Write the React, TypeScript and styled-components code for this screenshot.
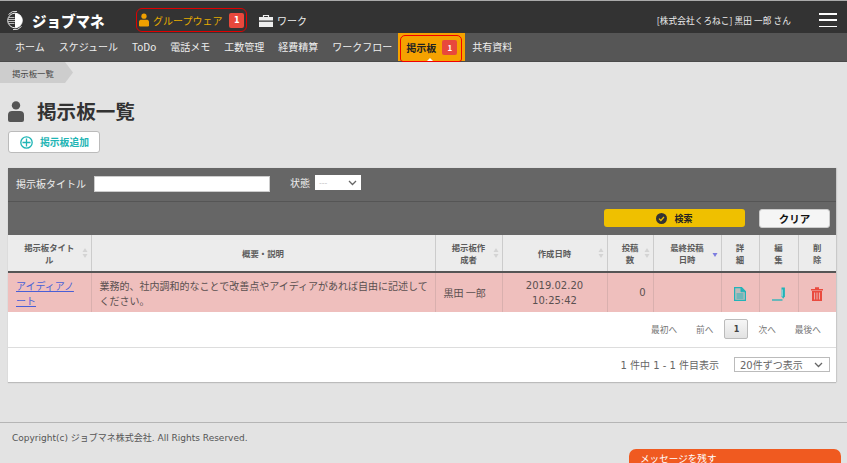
import React from "react";
import styled, { createGlobalStyle } from "styled-components";

const Global = createGlobalStyle`
  html, body { margin: 0; padding: 0; height: 100%; overflow: hidden; background: #e3e3e3; }
  body { font-family: "DejaVu Sans", "Noto Sans CJK JP", sans-serif; font-size: 10px; color: #555; }
  * { box-sizing: border-box; }
`;

const Page = styled.div`
  position: relative;
  width: 847px;
  height: 463px;
  overflow: hidden;
  border-top: 1px solid #aaa;
`;

const Header = styled.header`
  display: flex;
  align-items: center;
  height: 32px;
  background: #333;
  color: #fff;
  padding: 6px 10px 0 5px;
`;
const Logo = styled.div`
  display: flex;
  align-items: center;
  width: 131px;
  gap: 7px;
`;
const LogoText = styled.span`
  font-family: "Noto Sans CJK JP", sans-serif;
  font-size: 14.5px;
  font-weight: 900;
  letter-spacing: 0;
  white-space: nowrap;
`;
const GroupLink = styled.div`
  display: flex;
  align-items: center;
  width: 111px;
  height: 24px;
  border: 1.5px solid #e00000;
  border-radius: 6px;
  padding-left: 2px;
  color: #e5ab00;
`;
const LinkLabel = styled.span`
  font-family: "Noto Sans CJK JP", sans-serif;
  font-size: 10px;
  white-space: nowrap;
  margin-left: 4px;
`;
const Badge = styled.span`
  display: inline-flex;
  align-items: center;
  justify-content: center;
  width: 15px;
  height: 15px;
  background: #e8483c;
  border-radius: 2px;
  color: #fff;
  font-size: 8px;
  font-weight: 700;
`;
const GroupBadge = styled(Badge)`
  margin-left: 7px;
`;
const WorkLink = styled.div`
  display: flex;
  align-items: center;
  margin-left: 12px;
  color: #eee;
`;
const UserName = styled.div`
  margin-left: auto;
  font-size: 8.6px;
  font-family: "Noto Sans CJK JP", sans-serif;
  letter-spacing: 0.12px;
  color: #eee;
  white-space: nowrap;
`;
const Burger = styled.div`
  display: flex;
  flex-direction: column;
  justify-content: space-between;
  width: 18px;
  height: 14px;
  margin-left: 28px;
  span { display: block; height: 1.5px; background: #fff; }
`;

const Nav = styled.nav`
  display: flex;
  align-items: stretch;
  height: 29px;
  background: #565656;
  padding-left: 8px;
  border-bottom: 1px solid #4a4a4a;
`;
const NavItem = styled.div`
  display: flex;
  align-items: center;
  padding: 0 7px 2px;
  font-family: "Noto Sans CJK JP", sans-serif;
  font-size: 10px;
  color: #eee;
  white-space: nowrap;
`;
const ActiveItem = styled.div`
  position: relative;
  display: flex;
  align-items: center;
  width: 67px;
  margin-left: -1px;
  background: #f5a200;
  padding: 2px 3px 0 2px;
`;
const ActiveInner = styled.div`
  position: relative;
  display: flex;
  align-items: center;
  width: 62px;
  height: 27px;
  border: 1.5px solid #f00000;
  border-bottom-width: 1px;
  border-radius: 5px 5px 3px 3px;
  padding: 0 0 2px 5px;
  color: #222;
  font-family: "Noto Sans CJK JP", sans-serif;
  font-weight: 700;
  font-size: 10px;
  &::after {
    content: "";
    position: absolute;
    left: 26px;
    bottom: 0;
    border: 3px solid transparent;
    border-top: 0;
    border-bottom: 3px solid #fff;
  }
`;
const ActiveBadge = styled(Badge)`
  margin-left: 6px;
`;

const Crumb = styled.div`
  display: flex;
  height: 21px;
  width: 73px;
  align-items: center;
  padding-left: 12px;
  background: #cdcdcd;
  clip-path: polygon(0 0, 65px 0, 73px 50%, 65px 100%, 0 100%);
  font-family: "Noto Sans CJK JP", sans-serif;
  font-size: 8.4px;
  color: #444;
  white-space: nowrap;
`;

const TitleRow = styled.div`
  display: flex;
  align-items: center;
  gap: 13px;
  height: 30px;
  margin: 13px 0 0 8px;
`;
const Title = styled.h1`
  margin: 0;
  font-family: "Noto Sans CJK JP", sans-serif;
  font-size: 19.6px;
  font-weight: 700;
  color: #333;
  line-height: 1;
`;

const AddButton = styled.div`
  display: flex;
  align-items: center;
  width: 92px;
  height: 22px;
  margin: 5px 0 0 8px;
  padding-left: 11px;
  gap: 7px;
  background: #fff;
  border: 1px solid #bbb;
  border-radius: 3px;
  color: #1fb5b5;
  font-family: "Noto Sans CJK JP", sans-serif;
  font-weight: 700;
  font-size: 9.8px;
`;

const Panel = styled.section`
  width: 828px;
  height: 214px;
  margin: 15px 0 0 8px;
  background: #fff;
  box-shadow: 0 1px 1px #bbb, 1px 0 1px #ccc;
`;
const SearchRow = styled.div`
  display: flex;
  align-items: center;
  height: 34px;
  padding: 0 0 2px 8px;
  background: #666;
  border-bottom: 1px solid #555;
  color: #eee;
  font-family: "Noto Sans CJK JP", sans-serif;
  font-size: 10px;
`;
const TextInput = styled.div`
  width: 176px;
  height: 16px;
  margin-left: 8px;
  background: #fff;
  border: 1px solid #ccc;
`;
const StatusLabel = styled.span`
  margin: -3px 0 0 20px;
`;
const StatusSelect = styled.div`
  display: flex;
  align-items: center;
  justify-content: space-between;
  width: 46px;
  height: 15px;
  margin: -2px 0 0 5px;
  padding: 0 4px 0 4px;
  background: #fff;
  color: #bbb;
  font-size: 8px;
`;
const ActionRow = styled.div`
  display: flex;
  justify-content: flex-end;
  align-items: flex-start;
  height: 33px;
  padding: 7px 6px 0 0;
  gap: 14px;
  background: #666;
`;
const SearchButton = styled.div`
  display: flex;
  align-items: center;
  justify-content: center;
  gap: 7px;
  width: 141px;
  height: 18px;
  background: #efc000;
  border-radius: 3px;
  color: #222;
  font-family: "Noto Sans CJK JP", sans-serif;
  font-weight: 700;
  font-size: 9px;
`;
const ClearButton = styled.div`
  display: flex;
  align-items: center;
  justify-content: center;
  width: 71px;
  height: 19px;
  background: #f5f5f5;
  border: 1px solid #ccc;
  border-radius: 3px;
  color: #111;
  font-family: "Noto Sans CJK JP", sans-serif;
  font-weight: 700;
  font-size: 10.5px;
`;

const Table = styled.table`
  width: 828px;
  table-layout: fixed;
  border-collapse: collapse;
`;
const Th = styled.th`
  position: relative;
  height: 37px;
  padding: 0;
  background: #ececec;
  border-right: 1px solid #ccc;
  border-bottom: 2px solid #555;
  font-family: "Noto Sans CJK JP", sans-serif;
  font-size: 8.4px;
  line-height: 12px;
  font-weight: 700;
  color: #5c5c5c;
  &:last-child { border-right: 0; }
`;
const Sort = styled.svg`
  position: absolute;
  top: 13px;
  right: 3px;
`;
const Td = styled.td<{ $align?: string }>`
  height: 40px;
  padding: 0 7px 0 8px;
  background: #efbfbd;
  border-right: 1px solid #d9b0ae;
  font-size: 10px;
  line-height: 15px;
  font-family: "Noto Sans CJK JP", sans-serif;
  color: #5a5050;
  text-align: ${(p) => p.$align || "left"};
  &:last-child { border-right: 0; }
`;
const DescCell = styled(Td)`
  padding-right: 4px;
`;
const DateCell = styled(Td)`
  font-family: "DejaVu Sans", sans-serif;
  padding: 0;
`;
const CountCell = styled(Td)`
  font-family: "DejaVu Sans", sans-serif;
`;
const IconCell = styled(Td)`
  padding: 2px 0 0;
  svg { display: block; margin: 0 auto; }
`;
const TitleLink = styled.a`
  color: #4a5fd6;
  text-decoration: underline;
`;

const Pager = styled.div`
  display: flex;
  align-items: center;
  height: 36px;
  padding: 0 0 1px 643px;
  border-bottom: 1px solid #ddd;
  font-family: "Noto Sans CJK JP", sans-serif;
  font-size: 8.7px;
  color: #777;
  white-space: nowrap;
`;
const PagerLink = styled.span<{ $gap: number }>`
  margin-left: ${(p) => p.$gap}px;
`;
const PageCurrent = styled.span`
  display: flex;
  align-items: center;
  justify-content: center;
  width: 24px;
  height: 20px;
  margin: 0 0 0 11px;
  background: linear-gradient(#f6f6f6, #e2e2e2);
  border: 1px solid #bbb;
  border-radius: 2px;
  color: #444;
  font-family: "DejaVu Sans", sans-serif;
  font-weight: 700;
  font-size: 8px;
`;
const PageFoot = styled.div`
  display: flex;
  align-items: center;
  justify-content: flex-end;
  height: 33px;
  padding-right: 6px;
  font-family: "DejaVu Sans", "Noto Sans CJK JP", sans-serif;
  font-size: 10px;
  color: #666;
`;
const PerPage = styled.div`
  display: flex;
  align-items: center;
  justify-content: space-between;
  width: 96px;
  height: 15px;
  margin-left: 15px;
  padding: 0 6px 0 5px;
  border: 1px solid #bbb;
  background: #fff;
  white-space: nowrap;
  font-size: 10px;
`;

const Footer = styled.footer`
  height: 41px;
  margin-top: 40px;
  padding: 9px 0 0 12px;
  border-top: 1px solid #b5b5b5;
  font-size: 9px;
  line-height: 12px;
  color: #555;
  white-space: nowrap;
`;
const ChatTab = styled.div`
  position: absolute;
  left: 629px;
  top: 448px;
  width: 212px;
  height: 24px;
  padding: 2px 0 0 11px;
  background: #f05a20;
  border-radius: 7px 7px 0 0;
  color: #fff;
  font-family: "Noto Sans CJK JP", sans-serif;
  font-size: 9.6px;
  line-height: 14px;
`;

const Person = ({ color, w, h }: { color: string; w: number; h: number }) => (
  <svg width={w} height={h} viewBox="0 0 16 21">
    <circle cx="8" cy="4.4" r="4.2" fill={color} />
    <path d="M0 13.5C0 11 2 10 4 10h8c2 0 4 1 4 3.5V19a2 2 0 0 1-2 2H2a2 2 0 0 1-2-2z" fill={color} />
  </svg>
);

const Chevron = ({ color = "#666" }: { color?: string }) => (
  <svg width="9" height="6" viewBox="0 0 9 6">
    <path d="M1 1l3.5 3.5L8 1" fill="none" stroke={color} strokeWidth="1.3" />
  </svg>
);

const SortIcon = () => (
  <Sort width="6" height="10" viewBox="0 0 6 10">
    <path d="M3 0l2.5 4h-5zM3 10L.5 6h5z" fill="#d4d4d4" />
  </Sort>
);

const columns: [React.ReactNode, number, boolean][] = [
  [<>掲示板タイト<br />ル</>, 83, true],
  ["概要・説明", 344, false],
  [<>掲示板作<br />成者</>, 67, true],
  ["作成日時", 105, true],
  [<>投稿<br />数</>, 46, true],
  [<>最終投稿<br />日時</>, 68, false],
  [<>詳<br />細</>, 38, false],
  [<>編<br />集</>, 39, false],
  [<>削<br />除</>, 38, false],
];

export default function App() {
  return (
    <Page>
      <Global />
      <Header>
        <Logo>
          <svg width="20" height="21" viewBox="0 0 20 21">
            <path d="M3.5 4.5A9 9 0 0 1 12 1.4M16.5 16.5A9 9 0 0 1 8 19.6" fill="none" stroke="#ddd" strokeWidth="1" />
            <circle cx="10" cy="10.5" r="7.3" fill="#333" stroke="#eee" strokeWidth="1" />
            <path d="M10 3.2a7.3 7.3 0 0 1 0 14.6z" fill="#fff" />
            <path d="M3.5 7.5h6M3 9.5h7M3 11.5h7M3.5 13.5h6" stroke="#bbb" strokeWidth="1" />
          </svg>
          <LogoText>ジョブマネ</LogoText>
        </Logo>
        <GroupLink>
          <Person color="#f0a000" w={10} h={14} />
          <LinkLabel>グループウェア</LinkLabel>
          <GroupBadge>1</GroupBadge>
        </GroupLink>
        <WorkLink>
          <svg width="14" height="13" viewBox="0 0 14 13">
            <path d="M4.5 3V1.5h5V3" fill="none" stroke="#eee" strokeWidth="1.2" />
            <path d="M0 3h14v3.6H0zM0 7.8h14V13H0z" fill="#eee" />
          </svg>
          <LinkLabel>ワーク</LinkLabel>
        </WorkLink>
        <UserName>[株式会社くろねこ] 黒田 一郎 さん</UserName>
        <Burger>
          <span />
          <span />
          <span />
        </Burger>
      </Header>
      <Nav>
        {["ホーム", "スケジュール", "ToDo", "電話メモ", "工数管理", "経費精算", "ワークフロー"].map((t) => (
          <NavItem key={t}>{t}</NavItem>
        ))}
        <ActiveItem>
          <ActiveInner>
            掲示板
            <ActiveBadge>1</ActiveBadge>
          </ActiveInner>
        </ActiveItem>
        <NavItem>共有資料</NavItem>
      </Nav>
      <Crumb>掲示板一覧</Crumb>
      <TitleRow>
        <Person color="#555" w={16} h={21} />
        <Title>掲示板一覧</Title>
      </TitleRow>
      <AddButton>
        <svg width="13" height="13" viewBox="0 0 13 13">
          <circle cx="6.5" cy="6.5" r="5.7" fill="none" stroke="#1fb5b5" strokeWidth="1.3" />
          <path d="M6.5 2.5v8M2.5 6.5h8" stroke="#1fb5b5" strokeWidth="1.3" />
        </svg>
        掲示板追加
      </AddButton>
      <Panel>
        <SearchRow>
          掲示板タイトル
          <TextInput />
          <StatusLabel>状態</StatusLabel>
          <StatusSelect>
            ---
            <Chevron />
          </StatusSelect>
        </SearchRow>
        <ActionRow>
          <SearchButton>
            <svg width="11" height="11" viewBox="0 0 11 11">
              <circle cx="5.5" cy="5.5" r="5.5" fill="#333" />
              <path d="M3 5.6l1.9 1.9L8 4" fill="none" stroke="#efc000" strokeWidth="1.3" />
            </svg>
            検索
          </SearchButton>
          <ClearButton>クリア</ClearButton>
        </ActionRow>
        <Table>
          <colgroup>
            {columns.map(([, w], i) => (
              <col key={i} width={w} />
            ))}
          </colgroup>
          <thead>
            <tr>
              {columns.map(([label, , sortable], i) => (
                <Th key={i}>
                  {label}
                  {sortable && <SortIcon />}
                  {i === 5 && (
                    <Sort width="6" height="10" viewBox="0 0 6 10">
                      <path d="M3 9L.5 5h5z" fill="#7d7de0" />
                    </Sort>
                  )}
                </Th>
              ))}
            </tr>
          </thead>
          <tbody>
            <tr>
              <Td>
                <TitleLink>
                  アイディアノ
                  <br />
                  ート
                </TitleLink>
              </Td>
              <DescCell>業務的、社内調和的なことで改善点やアイディアがあれば自由に記述してください。</DescCell>
              <Td>黒田 一郎</Td>
              <DateCell $align="center">
                2019.02.20
                <br />
                10:25:42
              </DateCell>
              <CountCell $align="right">0</CountCell>
              <Td />
              <IconCell>
                <svg width="12" height="14" viewBox="0 0 12 14">
                  <path d="M.6.6h7l3.8 3.8v9H.6z" fill="none" stroke="#21b3b8" strokeWidth="1.2" />
                  <path d="M7 .6v4.2h4.4" fill="#21b3b8" stroke="#21b3b8" strokeWidth="1" />
                  <path d="M1 1h6v4.5h4V13H1z" fill="#21b3b8" fillOpacity=".25" />
                  <path d="M2.5 7h7M2.5 9h7M2.5 11h7" stroke="#21b3b8" strokeWidth="1" />
                </svg>
              </IconCell>
              <IconCell>
                <svg width="14" height="14" viewBox="0 0 14 14">
                  <path d="M0 13h10.5" stroke="#21b3b8" strokeWidth="1.3" />
                  <path d="M9.5.6h3.4v8.6l-1.7 2.6-1.7-2.6z" fill="#21b3b8" />
                  <path d="M10.2 2.5v7" stroke="#e9f6f6" strokeWidth=".7" />
                </svg>
              </IconCell>
              <IconCell>
                <svg width="12" height="14" viewBox="0 0 12 14">
                  <path d="M0 2h12v1.4H0zM4 .3h4V2H4z" fill="#ea4a3e" />
                  <path d="M1 4h10v10H1z" fill="#ea4a3e" />
                  <path d="M3.6 5.5v7M6 5.5v7M8.4 5.5v7" stroke="#efbfbd" strokeWidth=".9" />
                </svg>
              </IconCell>
            </tr>
          </tbody>
        </Table>
        <Pager>
          <span>最初へ</span>
          <PagerLink $gap={19}>前へ</PagerLink>
          <PageCurrent>1</PageCurrent>
          <PagerLink $gap={10}>次へ</PagerLink>
          <PagerLink $gap={19}>最後へ</PagerLink>
        </Pager>
        <PageFoot>
          1 件中 1 - 1 件目表示
          <PerPage>
            20件ずつ表示
            <Chevron />
          </PerPage>
        </PageFoot>
      </Panel>
      <Footer>Copyright(c) ジョブマネ株式会社. All Rights Reserved.</Footer>
      <ChatTab>メッセージを残す</ChatTab>
    </Page>
  );
}
